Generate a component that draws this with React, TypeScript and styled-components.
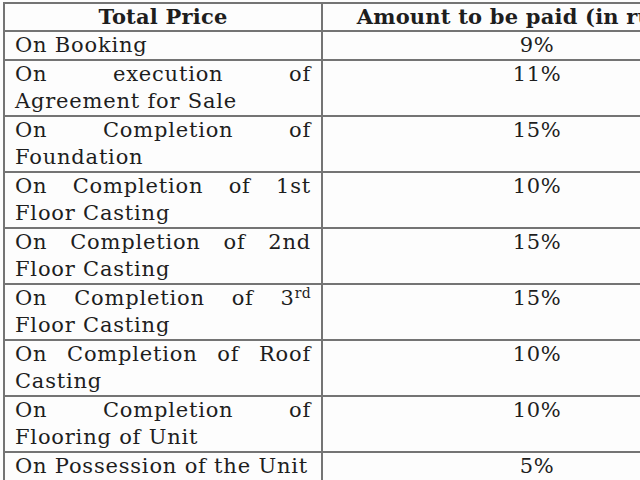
import React from 'react';
import styled, { createGlobalStyle } from 'styled-components';

const GlobalStyle = createGlobalStyle`
  html, body {
    margin: 0;
    padding: 0;
    background: #fdfdfd;
    overflow: hidden;
  }
`;

const Sup = styled.span`
  display: inline-block;
  font-size: 14px;
  line-height: 14px;
  vertical-align: top;
  margin-top: 1px;
  letter-spacing: 0.3px;
`;

interface Stage {
  label: React.ReactNode;
  amount: string;
}

const stages: Stage[] = [
  { label: 'On Booking', amount: '9%' },
  { label: 'On execution of Agreement for Sale', amount: '11%' },
  { label: 'On Completion of Foundation', amount: '15%' },
  { label: 'On Completion of 1st Floor Casting', amount: '10%' },
  { label: 'On Completion of 2nd Floor Casting', amount: '15%' },
  {
    label: (
      <>
        On Completion of 3<Sup>rd</Sup> Floor Casting
      </>
    ),
    amount: '15%',
  },
  { label: 'On Completion of Roof Casting', amount: '10%' },
  { label: 'On Completion of Flooring of Unit', amount: '10%' },
  { label: 'On Possession of the Unit', amount: '5%' },
];

export default function App() {
  return (
    <>
      <GlobalStyle />
      <Page>
        <Table>
          <thead>
            <tr>
              <HeadCell $width={296}>Total Price</HeadCell>
              <HeadCell>Amount to be paid (in rupees)</HeadCell>
            </tr>
          </thead>
          <tbody>
            {stages.map((stage, i) => (
              <tr key={i}>
                <LabelCell>{stage.label}</LabelCell>
                <AmountCell>{stage.amount}</AmountCell>
              </tr>
            ))}
          </tbody>
        </Table>
      </Page>
    </>
  );
}

const Page = styled.div`
  padding: 2px 0 0 3px;
  width: 800px;
`;

const Table = styled.table`
  border-collapse: collapse;
  width: 750px;
  table-layout: fixed;
  font-family: 'DejaVu Serif', 'Liberation Serif', serif;
  color: #1e1e1e;
  font-size: 21px;

  td,
  th {
    border: 2px solid #747474;
  }
`;

const HeadCell = styled.th<{ $width?: number }>`
  width: ${({ $width }) => ($width ? `${$width}px` : 'auto')};
  padding: 0 10px;
  line-height: 26px;
  font-weight: bold;
  text-align: center;
  white-space: nowrap;
  letter-spacing: 0.2px;
`;

const LabelCell = styled.td`
  padding: 0 10px;
  line-height: 27px;
  text-align: justify;
  vertical-align: top;
  letter-spacing: 0.8px;
`;

const AmountCell = styled.td`
  padding: 0 10px;
  line-height: 27px;
  text-align: center;
  vertical-align: top;
  letter-spacing: 0.6px;
`;
